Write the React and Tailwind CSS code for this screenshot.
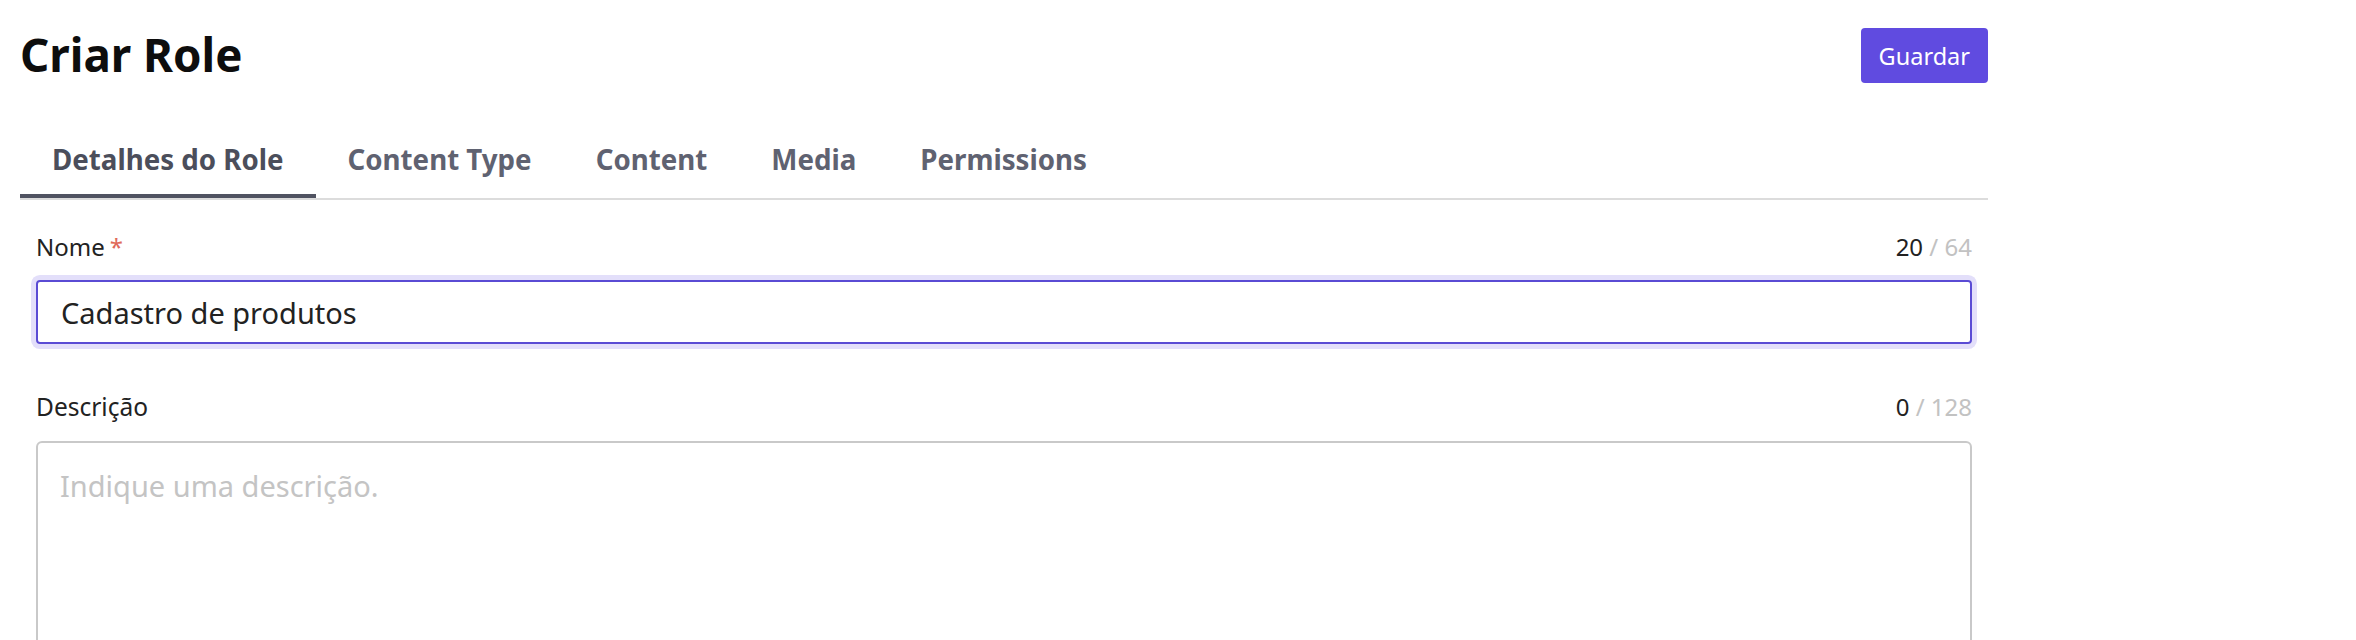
import { useState } from 'react';

const TABS = ['Detalhes do Role', 'Content Type', 'Content', 'Media', 'Permissions'];

function Counter({ value, max }) {
  return (
    <span className="text-[24px] leading-[32px] text-[#222]">
      {value} <span className="text-[#c2c2c2]">/ {max}</span>
    </span>
  );
}

export default function App() {
  const [active, setActive] = useState(0);
  const [name, setName] = useState('Cadastro de produtos');
  const [desc, setDesc] = useState('');

  return (
    <div className="w-[2356px] h-[640px] overflow-hidden bg-white font-['Noto_Sans',sans-serif]">
      <div className="ml-[20px] w-[1968px]">
        {/* Header */}
        <div className="flex items-start justify-between pt-[28px]">
          <h1 className="mt-[4px] text-[45.7px] leading-none font-bold text-[#0d0d0d]">Criar Role</h1>
          <button className="h-[55px] px-[18px] pt-[3px] rounded-[4px] bg-[#604be0] text-[23.5px] text-white">
            Guardar
          </button>
        </div>

        {/* Tabs */}
        <div className="mt-[45px] flex border-b-2 border-[#dcdcdc]">
          {TABS.map((t, i) => (
            <button
              key={t}
              onClick={() => setActive(i)}
              className={
                i === active
                  ? 'px-[32px] pt-[15px] pb-[19px] leading-[32px] text-[27.7px] font-bold text-[#4b4e5b] border-b-4 border-[#505361]'
                  : 'px-[32px] pt-[15px] pb-[19px] leading-[32px] text-[27.7px] font-bold text-[#5f6271] border-b-4 border-transparent'
              }
            >
              {t}
            </button>
          ))}
        </div>

        {/* Form */}
        <div className="px-[16px]">
          <div className="mt-[31px] mb-[17px] flex justify-between">
            <span className="text-[24px] leading-[32px] text-[#222]">
              Nome<span className="ml-[5px] text-[#e06a5a]">*</span>
            </span>
            <Counter value={name.length} max={64} />
          </div>
          <input
            value={name}
            onChange={e => setName(e.target.value)}
            className="block w-full h-[64px] px-[23px] rounded-[4px] border-2 border-[#5a4bd4] ring-[5px] ring-[#e3dffa] text-[29px] text-[#222] outline-none"
          />

          <div className="mt-[47px] mb-[18px] flex justify-between">
            <span className="text-[24.5px] leading-[32px] text-[#222]">Descrição</span>
            <Counter value={desc.length} max={128} />
          </div>
          <textarea
            value={desc}
            onChange={e => setDesc(e.target.value)}
            placeholder="Indique uma descrição."
            className="block w-full h-[320px] px-[22px] pt-[24px] rounded-[6px] border-2 border-[#c9c9c9] text-[29px] leading-[38px] text-[#222] placeholder:text-[#c4c4c4] outline-none resize-none"
          />
        </div>
      </div>
    </div>
  );
}
